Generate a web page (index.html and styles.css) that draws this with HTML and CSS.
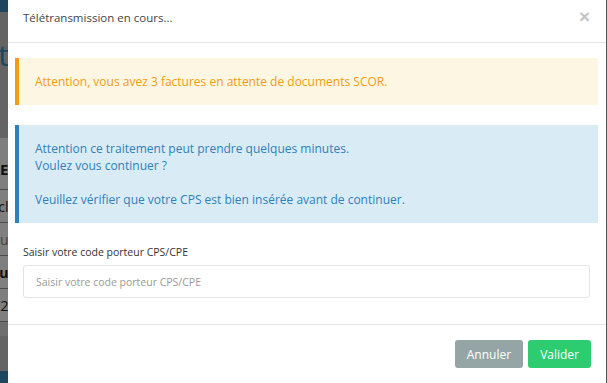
FILE: index.html
```html
<!DOCTYPE html>
<html lang="fr">
<head>
    <meta charset="UTF-8">
    <meta name="viewport" content="width=device-width, initial-scale=1.0">
    <title>Télétransmission</title>
    <link rel="stylesheet" href="styles.css">
</head>
<body>
    <!-- page derriere la modale -->
    <div class="page">
        <div class="topbar"></div>
        <div class="page-title"><span>Liste des factures à transmet</span></div>
        <div class="box">
            <div class="box-head"><span>FACTURE</span></div>
            <div class="row"><span>Excl</span></div>
            <div class="row light"><span>Du</span></div>
            <div class="row bold"><span>Nou</span></div>
            <div class="row"><span>12/2</span></div>
        </div>
        <div class="bottombar"></div>
    </div>
    <div class="backdrop"></div>

    <!-- modale -->
    <div class="modal">
        <div class="modal-header">
            <h4 class="modal-title">Télétransmission en cours...</h4>
            <button class="close">&times;</button>
        </div>
        <div class="modal-body">
            <div class="callout callout-warning">
                <p>Attention, vous avez 3 factures en attente de documents SCOR.</p>
            </div>
            <div class="callout callout-info">
                <p>Attention ce traitement peut prendre quelques minutes.<br>
                Voulez vous continuer ?<br><br>
                Veuillez vérifier que votre CPS est bien insérée avant de continuer.</p>
            </div>
            <div class="form-group">
                <label for="code">Saisir votre code porteur CPS/CPE</label>
                <input id="code" type="password" class="form-control" placeholder="Saisir votre code porteur CPS/CPE">
            </div>
        </div>
        <div class="modal-footer">
            <button class="btn btn-default">Annuler</button>
            <button class="btn btn-success">Valider</button>
        </div>
    </div>
</body>
</html>
```
FILE: styles.css
```css
* {
    box-sizing: border-box;
}
body {
    margin: 0;
    height: 383px;
    overflow: hidden;
    font-family: "Open Sans", "Liberation Sans", sans-serif;
    background-color: #c8c8c8;
    position: relative;
}

/* page de fond (seule une bande de 8px reste visible) */
.page {
    width: 607px;
    height: 383px;
    display: flex;
    flex-direction: column;
}
.topbar {
    height: 12px;
    background-color: #3c8dbc;
}
.page-title,
.box-head,
.row {
    width: 9px;
    display: flex;
    justify-content: flex-end;
    white-space: nowrap;
}
.page-title {
    height: 76px;
    align-items: center;
    padding-top: 8px;
    font-size: 30px;
    color: #3c8dbc;
}
.box {
    flex: 1;
    margin-top: 50px;
    background-color: #dcdcdc;
    color: #222;
    font-size: 14px;
}
.box-head,
.row {
    width: 100%;
    max-width: 8.5px;
    border-bottom: 1px solid #999;
    align-items: center;
}
.box-head {
    height: 52px;
    padding-top: 10px;
    font-weight: bold;
    font-size: 15px;
    background-color: #fff;
}
.row {
    height: 33px;
    background-color: #fff;
}
.row.light {
    color: #888;
}
.row.bold {
    font-weight: bold;
}
.bottombar {
    height: 12px;
    margin-top: 35px;
    background-color: #3c8dbc;
}
.backdrop {
    position: absolute;
    inset: 0;
    background-color: rgba(0, 0, 0, 0.5);
}

/* modale */
.modal {
    position: absolute;
    top: 0;
    left: 8px;
    width: 599px;
    height: 400px;
    background-color: #fff;
    border-right: 1px solid #555;
}
.modal-header {
    height: 43px;
    padding: 0 15px 8px 15px;
    border-bottom: 1px solid #e5e5e5;
    display: flex;
    align-items: center;
    justify-content: space-between;
}
.modal-title {
    margin: 0;
    font-size: 11.5px;
    font-weight: normal;
    color: #444;
}
.close {
    background: none;
    border: none;
    padding: 0;
    margin-right: 1px;
    font-size: 19px;
    font-weight: bold;
    color: #c4c4c4;
    font-family: "Liberation Sans", sans-serif;
    cursor: pointer;
}
.modal-body {
    padding: 15px 16px 15px 15px;
}
.callout {
    margin: 0 -8px 20px -8px;
    padding: 15px 20px 15px 16px;
    border-left: 4px solid;
    font-size: 12px;
    line-height: 17px;
}
.callout p {
    margin: 0;
}
.callout-warning {
    background-color: #fcf6e3;
    border-color: #f39c12;
    color: #f39c12;
}
.callout-info {
    background-color: #d9ecf6;
    border-color: #2f80b8;
    color: #2f80b8;
}
.form-group {
    padding-top: 1px;
    margin-bottom: 11px;
}
.form-group label {
    display: block;
    font-size: 10.5px;
    line-height: 17px;
    color: #333;
    margin-bottom: 4px;
}
.form-control {
    display: block;
    width: 100%;
    height: 33px;
    padding: 6px 12px;
    border: 1px solid #e3e3e3;
    border-radius: 3px;
    font-family: "Open Sans", "Liberation Sans", sans-serif;
    font-size: 10.5px;
    color: #555;
}
.form-control::placeholder {
    color: #999;
}
.modal-footer {
    border-top: 1px solid #e5e5e5;
    padding: 15px 15px;
    display: flex;
    justify-content: flex-end;
    gap: 5px;
}
.btn {
    height: 28px;
    padding: 0 12px;
    border: none;
    border-radius: 3px;
    font-family: "Open Sans", "Liberation Sans", sans-serif;
    font-size: 12px;
    color: #fff;
    cursor: pointer;
}
.btn-default {
    background-color: #95a5a6;
}
.btn-success {
    background-color: #2ecc71;
}
```
